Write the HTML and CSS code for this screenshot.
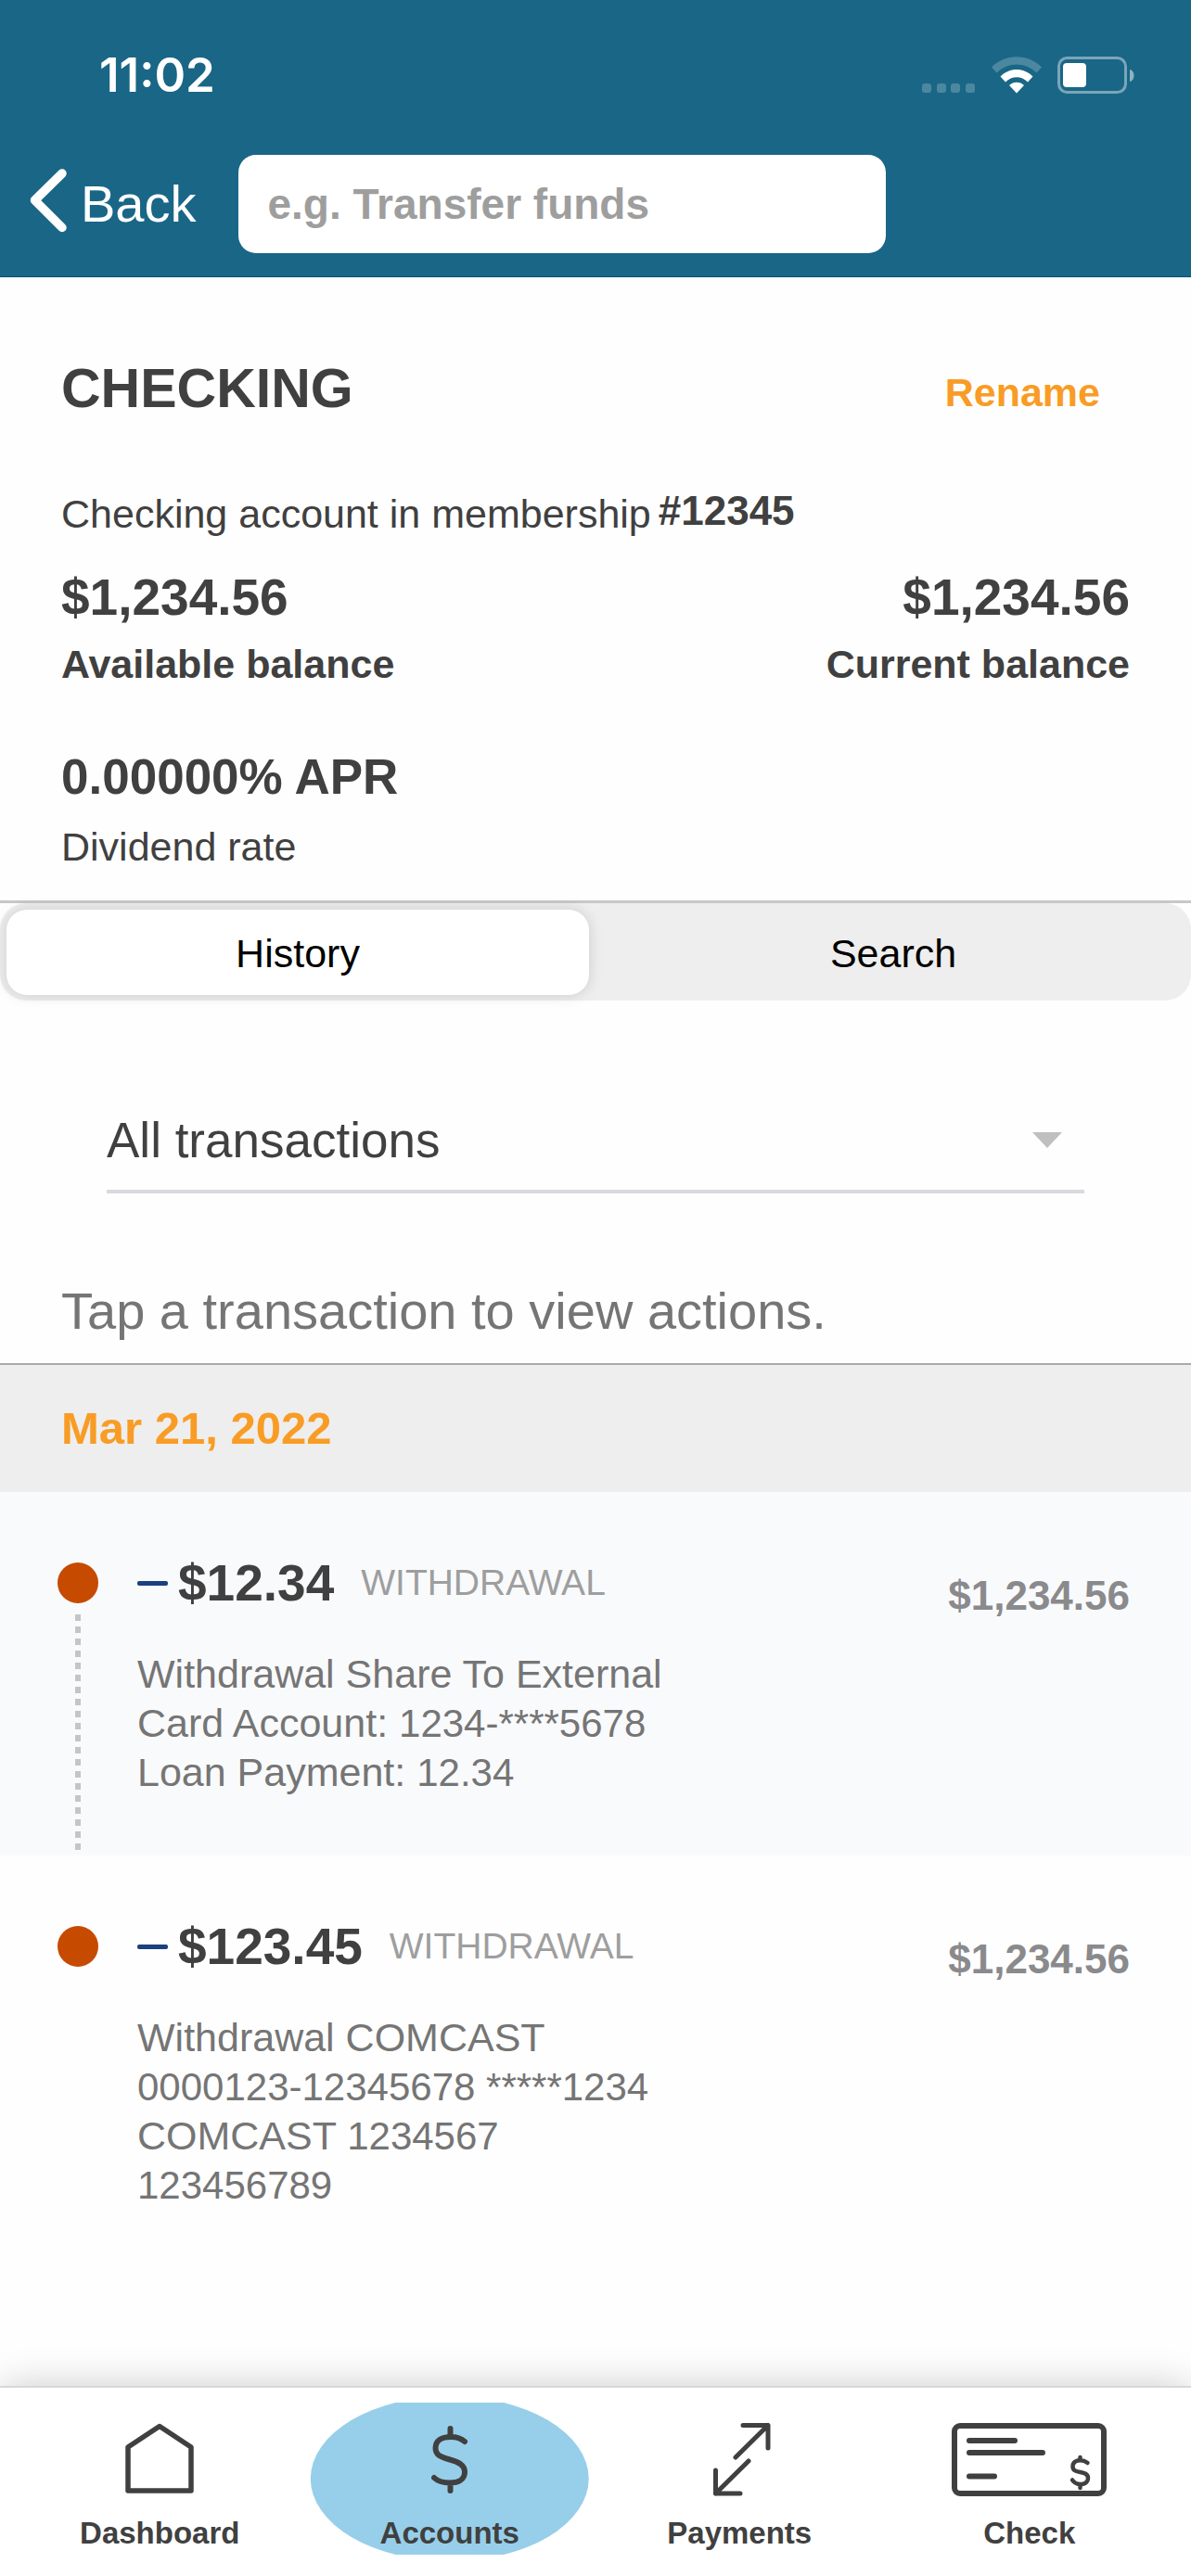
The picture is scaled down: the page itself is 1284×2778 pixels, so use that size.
FILE: index.html
```html
<!DOCTYPE html>
<html lang="en">
<head>
<meta charset="utf-8">
<meta name="viewport" content="width=device-width, initial-scale=1">
<title>Checking</title>
<link rel="stylesheet" href="styles.css">
</head>
<body>
<header class="header">
  <div class="status">
    <span class="status-time">11:02</span>
    <div class="status-icons">
      <svg width="58" height="40" viewBox="0 0 58 40" fill="#fff" fill-opacity=".22" aria-hidden="true">
        <rect x="0" y="29" width="10" height="10" rx="3"/><rect x="16" y="29" width="10" height="10" rx="3"/><rect x="31" y="29" width="10" height="10" rx="3"/><rect x="47" y="29" width="10" height="10" rx="3"/>
      </svg>
      <svg width="54" height="40" viewBox="0 0 54 40" aria-hidden="true">
        <path d="M0 11.500C15 -3.500 39 -3.500 54 11.500L48.500 17.500C36 5.500 18 5.500 5.500 17.500Z" fill="#fff" fill-opacity=".22"/>
        <path d="M9.500 21.500C19 11.500 35 11.500 44.500 21.500L39 27.500C32 20.500 22 20.500 15 27.500Z" fill="#fff"/>
        <path d="M19 31C23 26.500 31 26.500 35 31L27 39.500Z" fill="#fff"/>
      </svg>
      <svg width="84" height="40" viewBox="0 0 84 40" aria-hidden="true">
        <rect x="1.500" y="1.500" width="72" height="37" rx="9" fill="none" stroke="#fff" stroke-opacity=".42" stroke-width="3"/>
        <rect x="6" y="7" width="25" height="26" rx="4" fill="#fff"/>
        <path d="M78 14C84 15 84 26 78 27Z" fill="#fff" fill-opacity=".5"/>
      </svg>
    </div>
  </div>
  <div class="toolbar">
    <button class="back" type="button">
      <svg width="40" height="76" viewBox="0 0 40 76" fill="none" stroke="#fff" stroke-width="9.500" stroke-linecap="round" stroke-linejoin="round" aria-hidden="true"><path d="M35 5L5.500 34L35 63.500"/></svg>
      Back
    </button>
    <input class="search" type="search" placeholder="e.g. Transfer funds" aria-label="Search">
  </div>
</header>

<main>
  <section class="account">
    <div class="account-title">
      <h1>CHECKING</h1>
      <button class="rename" type="button">Rename</button>
    </div>
    <p class="membership">Checking account in membership <strong>#12345</strong></p>
    <dl class="balances">
      <div class="balance">
        <dt>Available balance</dt>
        <dd>$1,234.56</dd>
      </div>
      <div class="balance balance-end">
        <dt>Current balance</dt>
        <dd>$1,234.56</dd>
      </div>
    </dl>
    <dl class="rate">
      <dt>Dividend rate</dt>
      <dd>0.00000% APR</dd>
    </dl>
  </section>

  <div class="segments" role="tablist">
    <button class="segment segment-active" type="button" role="tab" aria-selected="true">History</button>
    <button class="segment" type="button" role="tab" aria-selected="false">Search</button>
  </div>

  <div class="filter">
    <select class="filter-select" aria-label="Transaction type">
      <option>All transactions</option>
    </select>
    <svg class="filter-arrow" width="32" height="17" viewBox="0 0 32 17" fill="#bfbfbf" aria-hidden="true"><path d="M0 0H32L16 17Z"/></svg>
  </div>
  <p class="hint">Tap a transaction to view actions.</p>

  <h2 class="date">Mar 21, 2022</h2>
  <article class="entry entry-shaded">
    <div class="marker"><span class="dot"></span><span class="trail"></span></div>
    <div class="entry-body">
      <div class="entry-head"><span class="minus"></span><span class="amount">$12.34</span><span class="kind">WITHDRAWAL</span></div>
      <p class="details">Withdrawal Share To External<br>Card Account: <span class="number">1234-****5678</span><br>Loan Payment: <span class="number">12.34</span></p>
    </div>
    <span class="running">$1,234.56</span>
  </article>
  <article class="entry">
    <div class="marker"><span class="dot"></span></div>
    <div class="entry-body">
      <div class="entry-head"><span class="minus"></span><span class="amount">$123.45</span><span class="kind">WITHDRAWAL</span></div>
      <p class="details">Withdrawal COMCAST<br><span class="number">0000123-12345678 *****1234</span><br>COMCAST <span class="number">1234567</span><br><span class="number">123456789</span></p>
    </div>
    <span class="running">$1,234.56</span>
  </article>
</main>

<nav class="tabs">
  <a class="tab" href="#dashboard">
    <svg width="74" height="80" viewBox="0 0 74 80" fill="none" stroke="#404040" stroke-width="5.500" stroke-linejoin="round" aria-hidden="true"><path d="M3 27L37 4.500L71 27V74H3Z"/></svg>
    Dashboard
  </a>
  <a class="tab tab-active" href="#accounts" aria-current="page">
    <svg width="40" height="80" viewBox="0 0 40 80" fill="none" stroke="#404040" stroke-width="6" stroke-linecap="round" aria-hidden="true"><path d="M20.500 7V15M20.500 66V74M36 21C32 17.500 26 16 21 16C11 16 4.500 20 4.500 28C4.500 36 11 38 20 40.500C29 43 36 46 36 54C36 62 29 65.500 20 65.500C13 65.500 7 64 3 60"/></svg>
    Accounts
  </a>
  <a class="tab" href="#payments">
    <svg width="68" height="80" viewBox="0 0 68 80" fill="none" stroke="#404040" stroke-width="5" stroke-linecap="round" stroke-linejoin="round" aria-hidden="true"><path d="M38 3.500H65V28M65 3.500L30 38M8.500 52V77H35M8.500 77L44 42"/></svg>
    Payments
  </a>
  <a class="tab" href="#check">
    <svg width="168" height="80" viewBox="0 0 168 80" fill="none" stroke="#404040" stroke-width="6" stroke-linecap="round" aria-hidden="true"><rect x="3" y="4" width="161" height="73" rx="6"/><path d="M19 20H68M19 33H98M19 58.500H46"/><path stroke-width="4.500" d="M138.500 38V41M138.500 67.500V71M146.500 44C140 39 130.500 41 130.500 48C130.500 57 147 51 147 60.500C147 68 135 69.500 130 62.500"/></svg>
    Check
  </a>
</nav>
</body>
</html>
```
FILE: styles.css
```css
* {
  box-sizing: border-box;
}

body {
  margin: 0;
  min-height: 100vh;
  display: flex;
  flex-direction: column;
  background: #fefefe;
  color: #404040;
  font-family: "Liberation Sans", Arial, sans-serif;
  font-size: 43px;
  line-height: 52px;
}

h1,
h2,
p,
dl,
dd {
  margin: 0;
}

button,
input,
select {
  margin: 0;
  padding: 0;
  border: 0;
  background: none;
  color: inherit;
  font: inherit;
}

/* Header */

.header {
  padding-bottom: 25px;
  border-bottom: 1px solid #0b5071;
  background: #1a6686;
  color: #fff;
}

.status {
  display: flex;
  align-items: center;
  justify-content: space-between;
  padding: 56px 60px 61px 107px;
}

.status-time {
  font: 600 51px/50px Inter, sans-serif;
}

.status-icons {
  display: flex;
  gap: 17px;
}

.toolbar {
  display: flex;
  align-items: center;
  gap: 45px;
  padding: 0 32px;
}

.back {
  display: flex;
  align-items: center;
  gap: 15px;
  font-size: 56px;
  line-height: 76px;
}

.search {
  flex: 0 1 698px;
  min-width: 0;
  height: 106px;
  padding: 0 32px;
  border-radius: 19px;
  background: #fff;
  color: #404040;
  font-size: 46px;
  font-weight: bold;
}

.search::placeholder {
  color: #9e9e9e;
  opacity: 1;
}

/* Account summary */

.account {
  padding: 90px 66px 32px;
  border-bottom: 3px solid #c8c8c9;
}

.account-title {
  display: flex;
  align-items: flex-end;
  justify-content: space-between;
}

h1 {
  font-size: 59px;
  line-height: 60px;
}

.rename {
  margin-right: 32px;
  color: #f99c25;
  font-weight: bold;
}

.membership {
  display: flex;
  align-items: flex-start;
  gap: 8px;
  margin-top: 79px;
}

.membership strong {
  font-size: 44px;
  line-height: 46px;
}

.balances {
  display: flex;
  justify-content: space-between;
  margin: 32px 0 64px;
  font-weight: bold;
}

.balance {
  display: flex;
  flex-direction: column-reverse;
  gap: 14px;
}

.balance-end {
  text-align: right;
}

.balance dd {
  font-size: 55px;
  line-height: 64px;
}

.rate {
  display: flex;
  flex-direction: column-reverse;
  gap: 17px;
}

.rate dd {
  font-size: 53px;
  font-weight: bold;
  line-height: 64px;
}

/* History / search switch */

.segments {
  display: grid;
  grid-template-columns: 1fr 1fr;
  gap: 14px;
  padding: 7px 7px 6px;
  border-radius: 28px;
  background: #eee;
}

.segment {
  height: 92px;
  padding-top: 2px;
  border-radius: 22px;
  color: #000;
}

.segment-active {
  background: #fff;
  box-shadow: 0 0 16px rgba(0, 0, 0, 0.14);
}

/* Filter */

.filter {
  display: grid;
  align-items: center;
  margin: 97px 115px 0;
  border-bottom: 4px solid #d9d9de;
}

.filter-select {
  grid-area: 1 / 1;
  appearance: none;
  width: 100%;
  height: 107px;
  font-size: 53px;
}

.filter-arrow {
  grid-area: 1 / 1;
  justify-self: end;
  margin-right: 24px;
  pointer-events: none;
}

.hint {
  padding: 93px 66px 22px;
  color: #757575;
  font-size: 56px;
  line-height: 68px;
}

/* Transactions */

.date {
  padding: 38px 66px 39px;
  border-top: 2px solid #aaa;
  background: #eee;
  color: #f99c25;
  font-size: 49px;
  line-height: 60px;
}

.entry {
  display: flex;
  padding: 0 66px 0 62px;
}

.entry-shaded {
  background: #f9fafc;
}

.marker {
  display: flex;
  flex-direction: column;
  align-items: center;
  gap: 12px;
  width: 44px;
  margin-right: 42px;
  padding-top: 76px;
}

.dot {
  width: 44px;
  height: 44px;
  border-radius: 50%;
  background: #c64a00;
}

.trail {
  flex: 1;
  width: 6px;
  background: repeating-linear-gradient(#c5c5c7 0 7px, transparent 7px 13px);
}

.entry-body {
  flex: 1;
  padding: 66px 0 63px;
}

.entry-head {
  display: flex;
  align-items: center;
  margin-bottom: 40px;
  line-height: 64px;
}

.minus {
  width: 33px;
  height: 5px;
  margin-right: 11px;
  border-radius: 2px;
  background: #1b4080;
}

.amount {
  margin-right: 29px;
  font-size: 55px;
  font-weight: bold;
}

.kind {
  color: #9e9e9e;
  font-size: 39px;
}

.details {
  color: #757575;
  line-height: 53px;
}

.number {
  font-size: 42px;
  line-height: 42px;
}

.running {
  padding-top: 86px;
  color: #8a8a8d;
  font-size: 44px;
  font-weight: bold;
}

/* Bottom tabs */

.tabs {
  position: sticky;
  bottom: 0;
  display: grid;
  grid-template-columns: repeat(4, 1fr);
  margin-top: auto;
  padding: 16px 18px 23px 16px;
  border-top: 2px solid #d8d8d8;
  background: #fff;
  box-shadow: 0 0 40px -2px rgba(0, 0, 0, 0.22);
}

.tab {
  display: flex;
  flex-direction: column;
  align-items: center;
  gap: 20px;
  padding: 21px 0 3px;
  color: #404040;
  font-size: 33px;
  font-weight: bold;
  line-height: 40px;
  text-decoration: none;
}

.tab-active {
  background: #97cfea;
  clip-path: ellipse(150px 89px);
}
```
